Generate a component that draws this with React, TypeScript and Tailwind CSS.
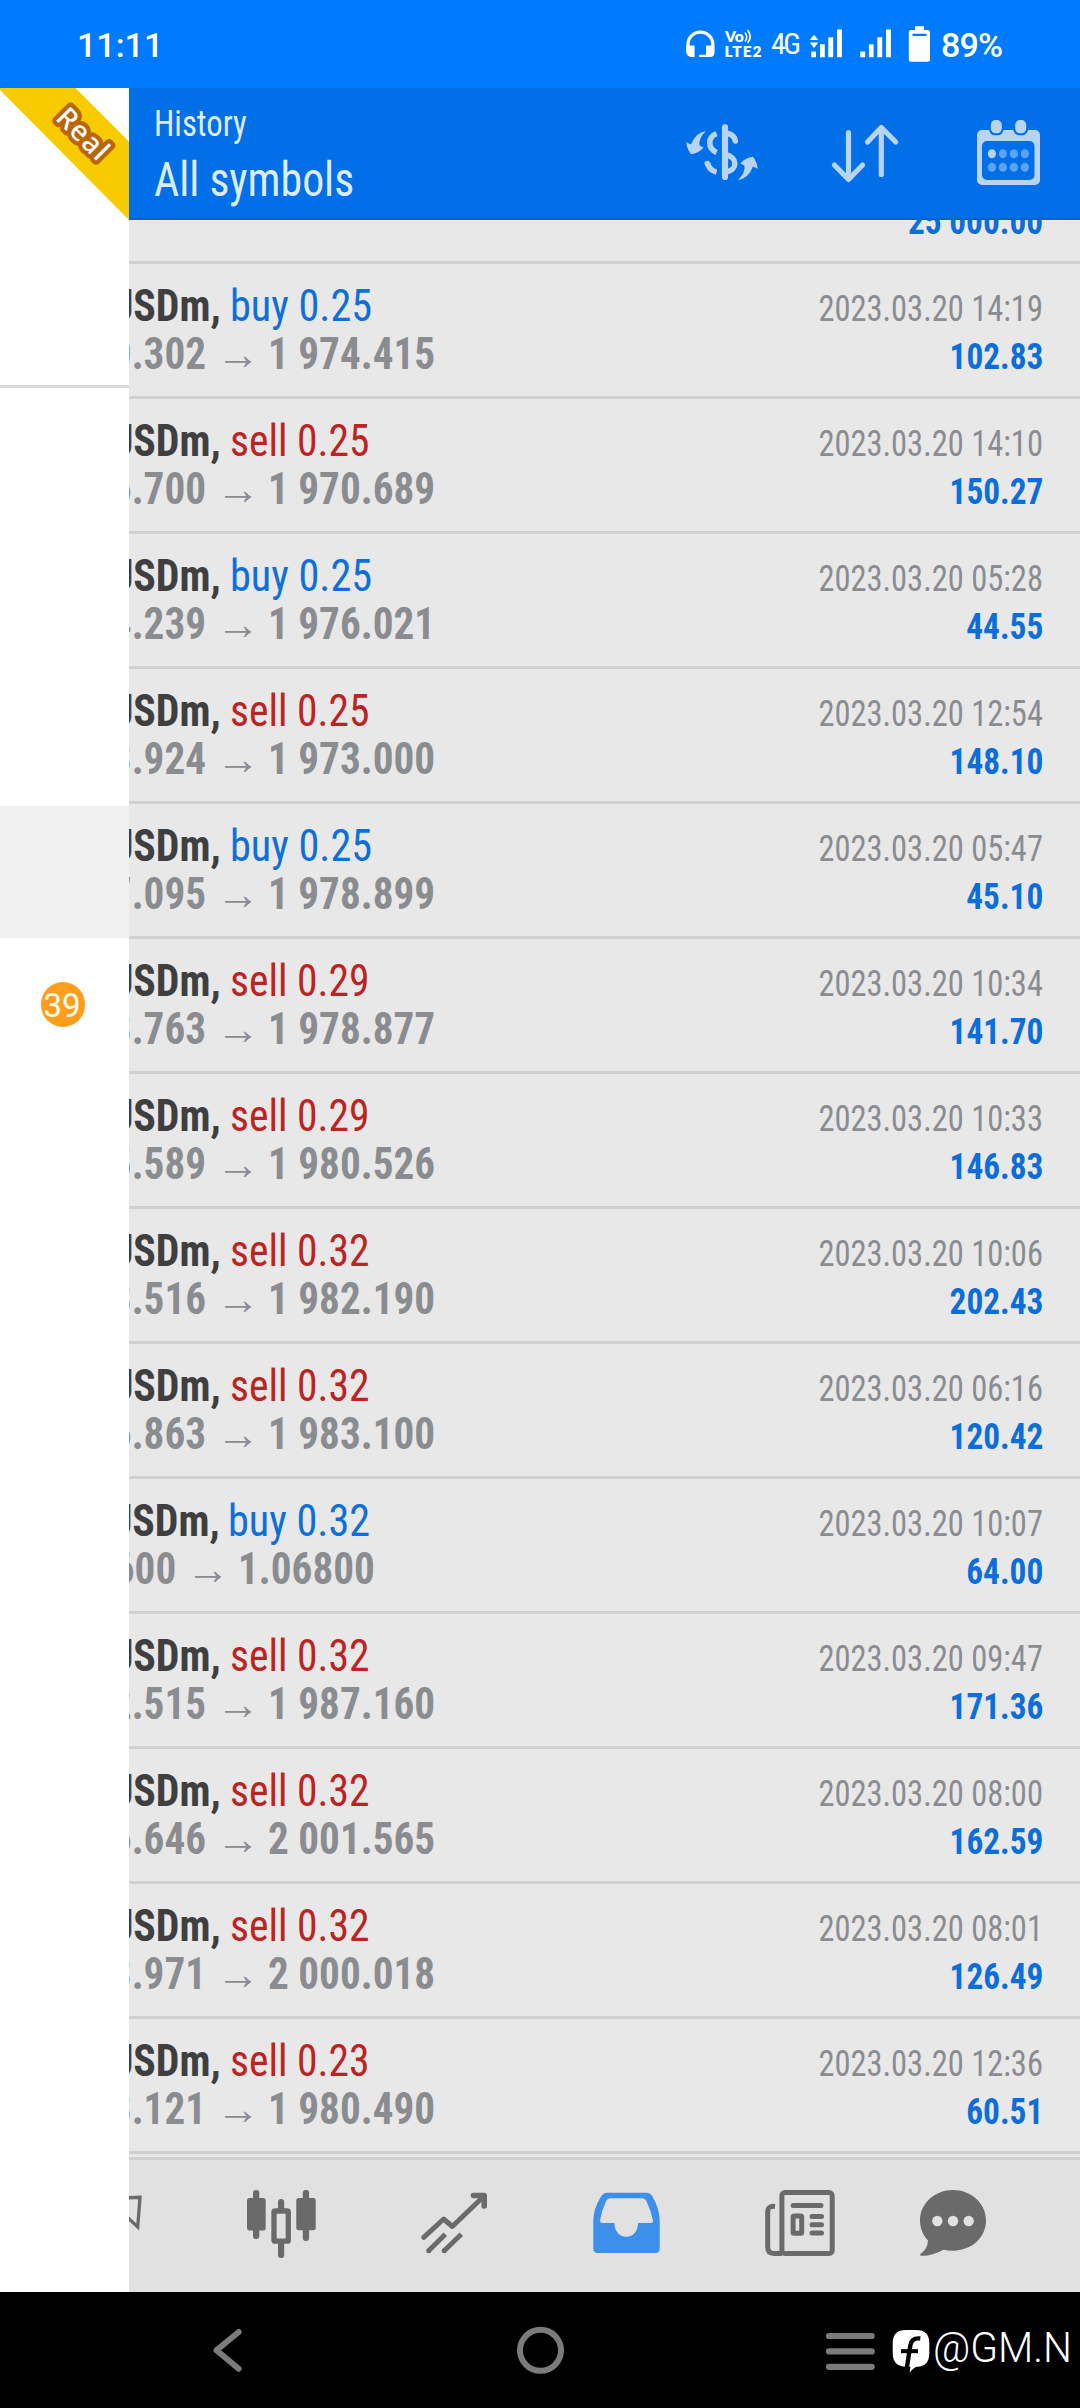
import type { ReactNode } from "react";

type Deal = {
  side: "buy" | "sell";
  volume: string;
  open: string;
  close: string;
  time: string;
  profit: string;
  narrow?: boolean;
};

const deals: Deal[] = [
  { side: "buy", volume: "0.25", open: "0.302", close: "1 974.415", time: "14:19", profit: "102.83" },
  { side: "sell", volume: "0.25", open: "6.700", close: "1 970.689", time: "14:10", profit: "150.27" },
  { side: "buy", volume: "0.25", open: "4.239", close: "1 976.021", time: "05:28", profit: "44.55" },
  { side: "sell", volume: "0.25", open: "3.924", close: "1 973.000", time: "12:54", profit: "148.10" },
  { side: "buy", volume: "0.25", open: "7.095", close: "1 978.899", time: "05:47", profit: "45.10" },
  { side: "sell", volume: "0.29", open: "3.763", close: "1 978.877", time: "10:34", profit: "141.70" },
  { side: "sell", volume: "0.29", open: "5.589", close: "1 980.526", time: "10:33", profit: "146.83" },
  { side: "sell", volume: "0.32", open: "3.516", close: "1 982.190", time: "10:06", profit: "202.43" },
  { side: "sell", volume: "0.32", open: "6.863", close: "1 983.100", time: "06:16", profit: "120.42" },
  { side: "buy", volume: "0.32", open: "600", close: "1.06800", time: "10:07", profit: "64.00", narrow: true },
  { side: "sell", volume: "0.32", open: "2.515", close: "1 987.160", time: "09:47", profit: "171.36" },
  { side: "sell", volume: "0.32", open: "6.646", close: "2 001.565", time: "08:00", profit: "162.59" },
  { side: "sell", volume: "0.32", open: "3.971", close: "2 000.018", time: "08:01", profit: "126.49" },
  { side: "sell", volume: "0.23", open: "3.121", close: "1 980.490", time: "12:36", profit: "60.51" },
];

function Icon({ box, className, children }: { box: string; className: string; children: ReactNode }) {
  return (
    <svg viewBox={box} className={`block shrink-0 ${className}`} fill="none">
      {children}
    </svg>
  );
}

function StatusBar() {
  return (
    <div className="flex h-[88px] shrink-0 justify-between bg-[#007aff] text-white">
      <div className="pl-[77px] pt-[25px] font-[Roboto] text-[34px] font-medium leading-[40px]">11:11</div>
      <Icon box="680 0 400 88" className="h-[88px] w-[400px]">
        <g fill="#fff">
          <path
            d="M688 53V44.500a12.400 12.400 0 0 1 24.800 0V53"
            stroke="#fff"
            strokeWidth="3.200"
            fill="none"
          />
          <path d="M686.400 45.500h8.200v11.500h-3.500a4.700 4.700 0 0 1-4.700-4.700zM706 45.500h8.300V53a4 4 0 0 1-4 4H699v-2.200h7z" />
          <text x="725" y="42.200" className="font-[Lato] text-[15.500px] font-extrabold">
            Vo
          </text>
          <text x="724.500" y="57.300" textLength="37" className="font-[Lato] text-[15.500px] font-extrabold">
            LTE2
          </text>
          <g stroke="#fff" strokeWidth="1.600" fill="none">
            <path d="M745 32.500q3.500 4.500 0 9" />
            <path d="M747.500 30q5.500 6.500 0 13" />
          </g>
          <text x="771" y="54" textLength="30" className="font-['Roboto_Condensed'] text-[30px]">
            4G
          </text>
          <path d="M814 34.700l4.300 5.300h-8.600zM814 48l4.300-5.500h-8.600z" />
          <path d="M811.300 51.500h4.700v5.800h-4.700zM820 44.300h4.800v13H820zM828.300 37.300h4.900v20h-4.900zM837 29.500h4.900v27.800H837z" />
          <path d="M860.300 51.500h4.900v5.800h-4.900zM868.900 44.300h4.700v13h-4.700zM877.300 37.300h4.900v20h-4.900zM886 29.500h4.900v27.800H886z" />
          <path
            fillRule="evenodd"
            d="M915 26.200h9v3.800h3.500a2.500 2.500 0 0 1 2.500 2.500V59.200a2.500 2.500 0 0 1-2.500 2.500H911.300a2.500 2.500 0 0 1-2.500-2.500V32.500a2.500 2.500 0 0 1 2.500-2.500H915zM912.500 33.700v2.200h14v-2.200z"
          />
          <text x="941" y="57.200" textLength="62" className="font-[Roboto] text-[34px] font-medium">
            89%
          </text>
        </g>
      </Icon>
    </div>
  );
}

function Drawer() {
  return (
    <div className="flex w-[129px] shrink-0 flex-col bg-white">
      <Icon box="0 88 129 132" className="h-[132px] w-[129px]">
        <path d="M0 88H75.500L129 141.500V220L0 90z" fill="#f8cb00" />
        <text
          transform="translate(76 140.500) rotate(45)"
          textAnchor="middle"
          textLength="61"
          fill="#fff"
          stroke="#b96508"
          strokeWidth="8.500"
          strokeLinejoin="round"
          className="font-['Noto_Sans'] text-[28px] font-medium [paint-order:stroke_fill]"
        >
          Real
        </text>
      </Icon>
      <div className="h-[168px] border-b-[3px] border-[#d9d9d9]" />
      <div className="h-[418px]" />
      <div className="h-[132px] bg-[#f0f0f0]" />
      <div className="flex h-[132px] items-center pl-[41px]">
        <div className="flex h-[45px] w-[44px] items-center justify-center rounded-full bg-[#ff9d1c] font-[Roboto] text-[33px] leading-none text-[#fffdf0]">
          <span className="-ml-[2px] pt-[2px]">39</span>
        </div>
      </div>
    </div>
  );
}

function Header() {
  return (
    <div className="flex h-[132px] shrink-0 items-center justify-between border-b-2 border-[#0565c9] bg-[#006fe8] pl-[25px] pr-[36px] text-[#deebfb]">
      <div className="mt-[2px] origin-left scale-x-[0.912] font-['Roboto_Condensed']">
        <div className="text-[36px] leading-[50px]">History</div>
        <div className="pt-px text-[48px] leading-[60px]">All symbols</div>
      </div>
      <div className="flex gap-[71px]">
        <Icon box="686 115 72 76" className="h-[76px] w-[72px]">
          <g stroke="#b9d4f3" strokeWidth="5.500">
            <path d="M725 127.400V177" strokeWidth="6.200" strokeLinecap="round" />
            <path d="M726 133q8.500 1.500 9.300 8" strokeLinecap="round" />
            <path d="M725 154.500C738 157 738 170 726 172" />
            <path d="M716.600 133.700C707.500 137 707.500 148.500 716.600 152.500" />
            <path d="M707.500 163q2 7.500 9.100 9" />
            <path d="M707.300 163.500l.3.800" strokeLinecap="round" />
          </g>
          <g fill="#b9d4f3">
            <path d="M706 131Q695.500 132.500 691 144.500L686.200 142.300Q687 149 691 154.200Q698.500 153.500 703.600 147.500L699.500 145.500Q698.500 138 706 131z" />
            <path
              transform="rotate(180 722 155.500)"
              d="M706 131Q695.500 132.500 691 144.500L686.200 142.300Q687 149 691 154.200Q698.500 153.500 703.600 147.500L699.500 145.500Q698.500 138 706 131z"
            />
          </g>
        </Icon>
        <Icon box="829 115 72 76" className="h-[76px] w-[72px]">
          <g stroke="#b9d4f3" strokeWidth="5.200" strokeLinecap="round" strokeLinejoin="round">
            <path d="M848.500 132.700V179M834.400 165L848.500 179.500L862.600 165" />
            <path d="M881.300 174.500V128M867.500 142L881.300 127.500L895.700 142" />
          </g>
        </Icon>
        <Icon box="972 115 72 76" className="h-[76px] w-[72px]">
          <path
            fillRule="evenodd"
            fill="#b9d4f3"
            d="M982 130h53a5 5 0 0 1 5 5v45a5 5 0 0 1-5 5h-53a5 5 0 0 1-5-5v-45a5 5 0 0 1 5-5zM987 141a5 5 0 0 0-5 5v29a5 5 0 0 0 5 5h42.500a5 5 0 0 0 5-5v-29a5 5 0 0 0-5-5z"
          />
          <rect x="988.800" y="118" width="15" height="17.300" rx="6.500" fill="#006fe8" />
          <rect x="1013.200" y="118" width="15" height="17.300" rx="6.500" fill="#006fe8" />
          <rect x="990.800" y="120" width="11" height="13.300" rx="4.800" fill="#b9d4f3" />
          <rect x="1015.200" y="120" width="11" height="13.300" rx="4.800" fill="#b9d4f3" />
          {[153.700, 167.200].map((cy) =>
            [991.900, 1002.900, 1013.900, 1024.900].map((cx) => (
              <ellipse
                key={`${cx}-${cy}`}
                cx={cx}
                cy={cy}
                rx="4.100"
                ry="4.500"
                fill={cx < 1000 && cy < 160 ? "#b9d4f3" : "#5ba3f4"}
              />
            )),
          )}
        </Icon>
      </div>
    </div>
  );
}

function DealRow({ deal }: { deal: Deal }) {
  const price = "inline-block scale-x-[0.915] whitespace-nowrap text-[45px] font-bold text-[#8b8c90]";
  return (
    <div className="h-[135px] shrink-0 border-b-[3px] border-[#d0d0d0] pr-[37px] pt-[18px] leading-[48px]">
      <div className="flex h-[48px] items-baseline">
        <div className={`flex shrink-0 justify-end overflow-hidden ${deal.narrow ? "w-[91px]" : "w-[92px]"}`}>
          <span className="inline-block origin-right scale-x-[0.93] text-[45px] font-bold text-[#3f3f3f]">USDm,</span>
        </div>
        <span
          className={`inline-block origin-left whitespace-nowrap text-[45px] ${deal.narrow ? "ml-[8px]" : "ml-[9px]"} ${
            deal.side === "buy" ? "scale-x-[0.938] text-[#0f6fd9]" : "scale-x-[0.923] text-[#bd2323]"
          }`}
        >
          {deal.side} {deal.volume}
        </span>
        <span className="ml-auto inline-block origin-right scale-x-[0.902] whitespace-nowrap text-[36px] text-[#8b8c90]">
          2023.03.20 {deal.time}
        </span>
      </div>
      <div className="flex h-[48px] items-baseline">
        <div className={`flex shrink-0 justify-end overflow-hidden ${deal.narrow ? "w-[47px]" : "w-[77px]"}`}>
          <span className={`origin-right ${price}`}>{deal.open}</span>
        </div>
        <span className="ml-[10px] w-[52px] font-['Liberation_Sans'] text-[44px] text-[#8b8c90]">→</span>
        <span className={`origin-left ${price}`}>{deal.close}</span>
        <span className="ml-auto inline-block origin-right scale-x-[0.925] text-[36px] font-bold text-[#0b6edb]">
          {deal.profit}
        </span>
      </div>
    </div>
  );
}

function Toolbar() {
  return (
    <div className="flex h-[135px] shrink-0 items-center gap-[101px] border-t-[3px] border-[#d0d0d0] bg-[#e1e1e1]">
      <Icon box="129 2188 15 76" className="h-[76px] w-[15px]">
        <path d="M122 2198L140 2197.300L137.700 2227L122 2212" stroke="#6a6a6a" strokeWidth="3.300" />
      </Icon>
      <Icon box="245 2188 72 76" className="h-[76px] w-[72px]">
        <g fill="#6a6a6a">
          <rect x="247" y="2198" width="18.700" height="32.500" rx="2.500" />
          <rect x="253" y="2190" width="6.300" height="49" rx="3" />
          <rect x="296.300" y="2198" width="19.400" height="32.300" rx="2.500" />
          <rect x="302.800" y="2190" width="6.300" height="51" rx="3" />
          <rect x="278" y="2199" width="6.200" height="59" rx="3" />
        </g>
        <rect x="274" y="2211" width="14.300" height="30.200" rx="1" fill="#e1e1e1" stroke="#6a6a6a" strokeWidth="5.300" />
      </Icon>
      <Icon box="418 2188 72 76" className="h-[76px] w-[72px]">
        <g stroke="#6a6a6a" strokeWidth="5" strokeLinejoin="round">
          <path d="M423.700 2237.300L443.700 2219L452.300 2226.500L483 2197" strokeLinecap="round" />
          <path d="M473.500 2195.500H484.200V2206" strokeWidth="5.600" strokeLinecap="round" />
          <path d="M428.700 2250.700L445.300 2234.300M444.200 2250.700L461.300 2234.300" />
          <path d="M428.700 2250.700h.010M444.200 2250.700h.010" strokeLinecap="round" />
        </g>
      </Icon>
      <Icon box="592 2188 72 76" className="h-[76px] w-[72px]">
        <path
          fillRule="evenodd"
          fill="#3c90e9"
          d="M608.500 2192.700H647.500Q651.500 2192.700 653.500 2196.500Q660.700 2209 660.700 2221V2248.500Q660.700 2253 656.200 2253H598.800Q594.300 2253 594.300 2248.500V2221Q594.300 2209 602 2196.500Q604 2192.700 608.500 2192.700zM611.500 2198.300Q608.500 2198.300 607 2201.300Q602.500 2211 601 2220.500Q601 2223 603.300 2223H615.500C615.500 2231 620 2236.700 627.300 2236.700S639 2231 639 2223H651.500Q654.300 2223 654 2220.500Q652 2211 647.500 2201.300Q646 2198.300 643 2198.300z"
        />
      </Icon>
      <Icon box="765 2188 72 76" className="h-[76px] w-[72px]">
        <g stroke="#6a6a6a" strokeWidth="5">
          <rect x="782.900" y="2192.600" width="50.300" height="60.800" rx="3" />
          <path d="M776 2206.500Q768.700 2205.500 768.700 2212V2247Q768.700 2253.400 775 2253.400H783" />
          <path d="M794.200 2205.500H822" strokeLinecap="round" />
          <path d="M813 2216.500H822.500M813 2224.800H822.500M813 2233.100H822.500" strokeLinecap="round" />
          <rect x="794.100" y="2216.100" width="8.600" height="17.200" rx="1" />
        </g>
      </Icon>
      <Icon box="917 2188 72 76" className="-ml-[20px] h-[76px] w-[72px]">
        <path
          fill="#6a6a6a"
          d="M953 2190C971.500 2190 986 2203.500 986 2220.500S971.500 2250.700 953 2250.700Q948 2250.700 943.500 2249.700Q931 2256.500 920.500 2255.700Q919.500 2254.500 921 2253.500Q927.500 2249 928 2240.500C923 2235.500 920 2228 920 2220.500C920 2203.500 934.500 2190 953 2190z"
        />
        <g fill="#e1e1e1">
          <circle cx="937.300" cy="2221" r="5.200" />
          <circle cx="953" cy="2221" r="5.200" />
          <circle cx="968.700" cy="2221" r="5.200" />
        </g>
      </Icon>
    </div>
  );
}

function SystemNav() {
  return (
    <div className="flex h-[116px] shrink-0 items-center bg-black">
      <Icon box="208 2320 38 60" className="ml-[208px] h-[60px] w-[38px]">
        <path d="M238.700 2332L216.500 2350.300L238.700 2368.700" stroke="#7b7b7b" strokeWidth="6" strokeLinecap="round" strokeLinejoin="round" />
      </Icon>
      <Icon box="510 2320 60 60" className="ml-[264px] h-[60px] w-[60px]">
        <circle cx="540.500" cy="2350.300" r="20.500" stroke="#7b7b7b" strokeWidth="6" />
      </Icon>
      <Icon box="820 2320 60 60" className="ml-[250px] h-[60px] w-[60px]">
        <path d="M829 2336H871.700M829 2351.400H871.700M829 2366.800H871.700" stroke="#7b7b7b" strokeWidth="6.200" strokeLinecap="round" />
      </Icon>
      <Icon box="890 2320 42 60" className="ml-[10px] h-[60px] w-[42px]">
        <path
          fill="#fff"
          d="M906 2330H916Q929.300 2330 929.300 2343V2353Q929.300 2366.500 917 2366.700Q914 2367 909.500 2372.700L910.500 2366.700H906Q892.700 2366.500 892.700 2353V2343Q892.700 2330 906 2330z"
        />
        <path d="M920.300 2338.500Q911.500 2337.500 910.300 2345.500L906.500 2370" stroke="#000" strokeWidth="4.400" />
        <path d="M901 2351.200H918" stroke="#000" strokeWidth="4" />
      </Icon>
      <span className="mb-[4px] ml-px inline-block origin-left scale-x-[0.97] font-[Roboto] text-[42px] font-light leading-[48px] text-white">
        @GM.N
      </span>
    </div>
  );
}

export default function App() {
  return (
    <div className="flex h-[2408px] w-[1080px] flex-col overflow-hidden bg-black">
      <StatusBar />
      <div className="flex h-[2204px] shrink-0">
        <Drawer />
        <div className="flex w-[951px] flex-col bg-[#e8e8e8] font-['Roboto_Condensed']">
          <Header />
          <div className="flex h-[44px] shrink-0 items-end justify-end overflow-hidden border-b-[3px] border-[#d0d0d0] pb-[15px] pr-[37px] text-[36px] font-bold leading-[48px] text-[#0b6edb]">
            <span className="origin-right scale-x-[0.925]">25 000.00</span>
          </div>
          {deals.map((deal) => (
            <DealRow key={deal.time} deal={deal} />
          ))}
          <div className="h-[3px] shrink-0" />
          <Toolbar />
        </div>
      </div>
      <SystemNav />
    </div>
  );
}
